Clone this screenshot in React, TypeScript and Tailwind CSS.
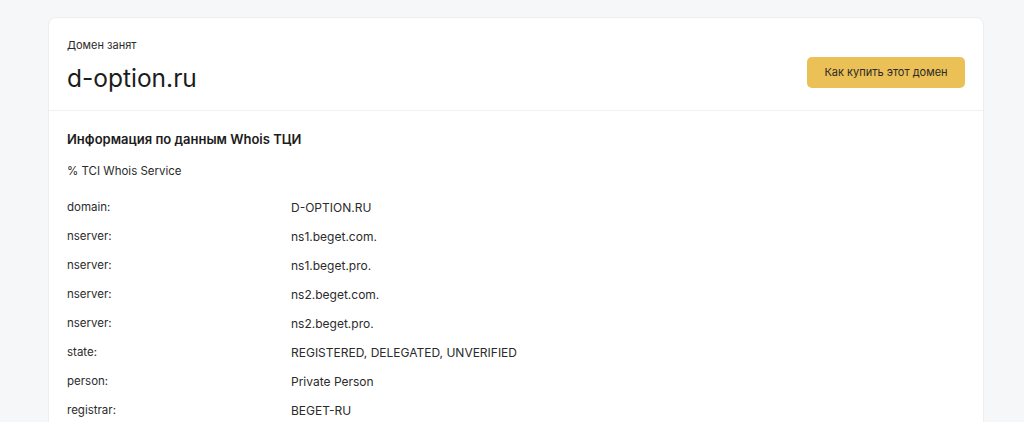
import React from "react";

const rows: [string, string][] = [
  ["domain:", "D-OPTION.RU"],
  ["nserver:", "ns1.beget.com."],
  ["nserver:", "ns1.beget.pro."],
  ["nserver:", "ns2.beget.com."],
  ["nserver:", "ns2.beget.pro."],
  ["state:", "REGISTERED, DELEGATED, UNVERIFIED"],
  ["person:", "Private Person"],
  ["registrar:", "BEGET-RU"],
];

export default function App() {
  return (
    <div
      className="min-h-screen bg-[#f6f7f8] pl-[48px] pr-[40px] pt-[17px] text-[#222]"
      style={{ fontFamily: "Inter, 'Noto Sans', sans-serif" }}
    >
      <div className="rounded-[8px] border border-[#eceef0] bg-white">
        <div className="flex items-end justify-between border-b border-[#f0f1f2] px-[18px] pt-[19px] pb-[16px]">
          <div>
            <div className="text-[11px] leading-[16px] text-[#2b2b2b]">Домен занят</div>
            <div className="mt-[9px] text-[24.5px] leading-[32px] text-[#1c1c1c]">d-option.ru</div>
          </div>
          <button className="mb-[6px] h-[31px] w-[158px] rounded-[5px] bg-[#ebc056] text-[11px] text-[#2a2a2a]">
            Как купить этот домен
          </button>
        </div>
        <div className="px-[18px] pt-[18px] pb-[20px]">
          <div className="text-[13px] font-semibold leading-[20px] text-[#1c1c1c]">
            Информация по данным Whois ТЦИ
          </div>
          <div className="mt-[13px] text-[11.5px] leading-[18px] text-[#2b2b2b]">% TCI Whois Service</div>
          <div className="mt-[13px]">
            {rows.map(([k, v], i) => (
              <div key={i} className="flex h-[29px] items-center text-[11.5px] text-[#2b2b2b]">
                <div className="w-[224px] shrink-0">{k}</div>
                <div className="text-[12px]">{v}</div>
              </div>
            ))}
          </div>
        </div>
      </div>
    </div>
  );
}
